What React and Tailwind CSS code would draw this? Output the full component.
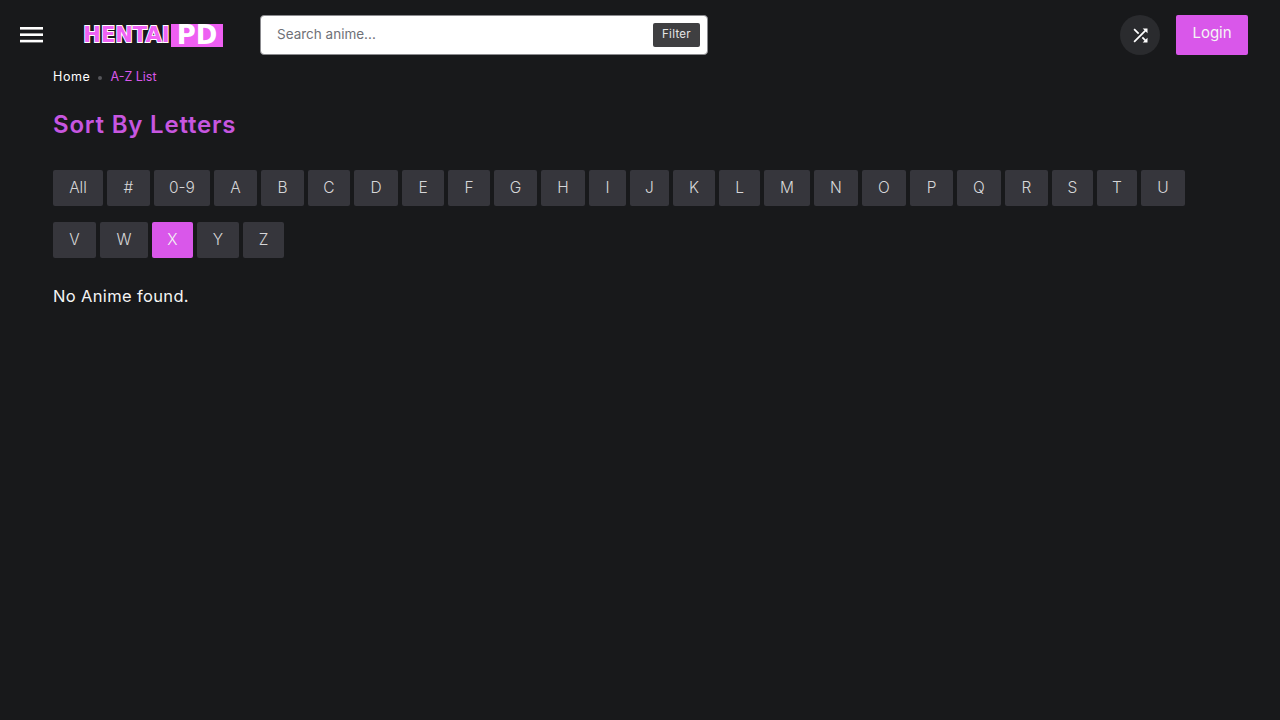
const row1 = [
  ["All", "w-[50px]"], ["#", "w-[43px]"], ["0-9", "w-[56px]"], ["A", "w-[43px]"], ["B", "w-[43px]"], ["C", "w-[42px]"],
  ["D", "w-[44px]"], ["E", "w-[42px]"], ["F", "w-[42px]"], ["G", "w-[43px]"], ["H", "w-[44px]"], ["I", "w-[37px]"],
  ["J", "w-[39px]"], ["K", "w-[42px]"], ["L", "w-[41px]"], ["M", "w-[46px]"], ["N", "w-[44px]"], ["O", "w-[44px]"],
  ["P", "w-[43px]"], ["Q", "w-[44px]"], ["R", "w-[43px]"], ["S", "w-[41px]"], ["T", "w-[40px]"], ["U", "w-[44px]"],
];
const row2 = [["V", "w-[43px]"], ["W", "w-[48px]"], ["X", "w-[41px]"], ["Y", "w-[42px]"], ["Z", "w-[41px]"]];

function Letter({ label, width }) {
  const active = label === "X";
  return (
    <a className={`${width} h-9 flex items-center justify-center rounded-[2px] text-[15.5px] font-light ${active ? "bg-[#d957ea] text-[#f3f3f3]" : "bg-[#36363c] text-[#d6d6d8]"}`}>
      {label}
    </a>
  );
}

export default function App() {
  return (
    <div className="min-h-[720px] bg-[#18191b] text-white font-['Inter','Liberation_Sans',sans-serif]">
      <header className="h-[70px] flex items-center pl-[16px] pr-[32px]">
        <svg width="30" height="30" viewBox="0 0 30 30" className="shrink-0">
          <g fill="#ffffff">
            <rect x="4" y="7" width="23" height="2.6" />
            <rect x="4" y="13.4" width="23" height="2.6" />
            <rect x="4" y="19.8" width="23" height="2.6" />
          </g>
        </svg>
        <div className="ml-[37px] w-[141px] flex items-center h-[24px] shrink-0 select-none">
          <span className="w-[87px] text-center text-[#f062f5] text-[21px] leading-none font-black font-['DejaVu_Sans',sans-serif] [-webkit-text-stroke:1.8px_#ffffff] [paint-order:stroke_fill] whitespace-nowrap">HENTAI</span>
          <span className="ml-[1px] w-[52px] h-[23px] bg-[#ee5ff2] flex items-center justify-center text-white text-[26px] leading-none font-black font-['DejaVu_Sans',sans-serif]">PD</span>
        </div>
        <div className="ml-[36px] w-[448px] h-[40px] bg-white border border-[#8b8b8f] rounded-[4px] flex items-center pl-[16px] pr-[7px]">
          <span className="flex-1 text-[13.5px] text-[#6f7177] pb-[1px]">Search anime...</span>
          <button className="w-[47px] h-[24px] bg-[#3f3f41] rounded-[2px] text-[11.5px] tracking-[0.3px] text-[#e6e6e6] flex items-center justify-center">Filter</button>
        </div>
        <div className="ml-auto flex items-center gap-4">
          <div className="w-10 h-10 rounded-full bg-[#2a2b2e] flex items-center justify-center">
            <svg width="21" height="21" viewBox="0 0 24 24" fill="#ffffff">
              <path d="M10.59 9.17L5.41 4 4 5.41l5.17 5.17 1.42-1.41zM14.5 4l2.04 2.04L4 18.59 5.41 20 17.96 7.46 20 9.5V4h-5.5zm.33 9.41l-1.41 1.41 3.13 3.13L14.5 20H20v-5.5l-2.04 2.04-3.13-3.13z" />
            </svg>
          </div>
          <button className="w-[72px] h-10 bg-[#d957ea] rounded-[2px] text-[15px] text-[#f5f5f5] pb-[4px]">Login</button>
        </div>
      </header>

      <main className="px-[53px]">
        <nav className="flex items-center text-[12.5px] h-[14px]">
          <span className="text-white tracking-[0.6px]">Home</span>
          <span className="mx-[8px] mt-[2px] w-[4px] h-[4px] rounded-full bg-[#55565a]"></span>
          <span className="text-[#d957ea]">A-Z List</span>
        </nav>
        <h1 className="mt-[25px] text-[24px] leading-[32px] font-semibold text-[#c756e0] tracking-[0.8px]">Sort By Letters</h1>
        <div className="mt-[29px] flex flex-col gap-4">
          <div className="flex gap-1">{row1.map(([l, w]) => <Letter key={l} label={l} width={w} />)}</div>
          <div className="flex gap-1">{row2.map(([l, w]) => <Letter key={l} label={l} width={w} />)}</div>
        </div>
        <p className="mt-[26px] text-[16.5px] leading-[24px] text-[#f4f4f4] tracking-[0.35px]">No Anime found.</p>
      </main>
    </div>
  );
}
